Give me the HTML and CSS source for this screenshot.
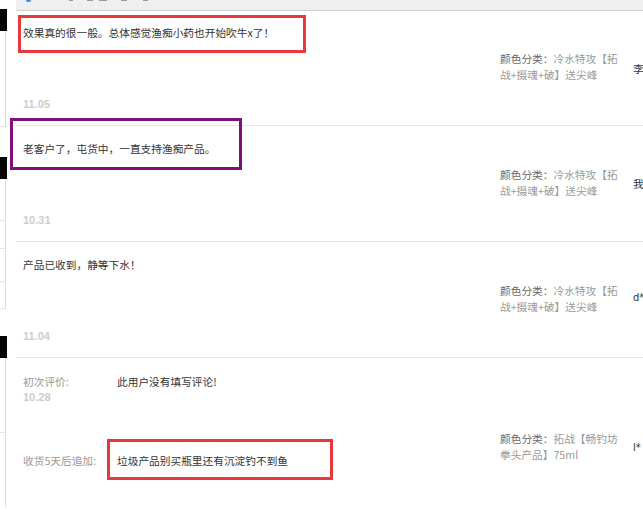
FILE: index.html
```html
<!DOCTYPE html>
<html lang="zh-CN">
<head>
<meta charset="utf-8">
<title>评价</title>
<link rel="stylesheet" href="styles.css">
</head>
<body>
<div class="page">
  <aside class="side">
    <div class="gap g9"></div>
    <div class="blk"></div>
    <div class="cell c96"></div>
    <div class="gap g30"></div>
    <div class="blk"></div>
    <div class="cell c15 nb"></div>
    <div class="cell c27"></div>
    <div class="cell c28"></div>
    <div class="cell c33"></div>
    <div class="cell c27"></div>
    <div class="gap g27"></div>
    <div class="blk"></div>
    <div class="cell c75"></div>
    <div class="cell c74 nb"></div>
  </aside>
  <main class="main">
    <div class="topbar">
      <span class="tb-dot"></span>
      <span class="tb-bit w4"></span>
      <span class="tb-bit w6"></span>
      <span class="tb-bit w8"></span>
      <span class="tb-bit w6"></span>
      <span class="tb-bit w5"></span>
    </div>

    <section class="row r1">
      <div class="body">
        <p class="comment">效果真的很一般。总体感觉渔痴小药也开始吹牛x了！</p>
        <p class="date">11.05</p>
      </div>
      <div class="sku"><p class="l1"><span class="k">颜色分类：</span>冷水特攻【拓</p><p class="l2">战+摄魂+破】送尖峰</p></div>
      <div class="user">李</div>
      <div class="mark red m1"></div>
    </section>

    <section class="row">
      <div class="body">
        <p class="comment">老客户了，屯货中，一直支持渔痴产品。</p>
        <p class="date">10.31</p>
      </div>
      <div class="sku"><p class="l1"><span class="k">颜色分类：</span>冷水特攻【拓</p><p class="l2">战+摄魂+破】送尖峰</p></div>
      <div class="user">我</div>
      <div class="mark purple m2"></div>
    </section>

    <section class="row">
      <div class="body">
        <p class="comment">产品已收到，静等下水！</p>
        <p class="date">11.04</p>
      </div>
      <div class="sku"><p class="l1"><span class="k">颜色分类：</span>冷水特攻【拓</p><p class="l2">战+摄魂+破】送尖峰</p></div>
      <div class="user u3">d*</div>
    </section>

    <section class="row last">
      <div class="body multi">
        <div class="first">
          <div class="label">初次评价:<p class="date d2">10.28</p></div>
          <p class="text">此用户没有填写评论!</p>
        </div>
        <div class="append">
          <div class="label">收货5天后追加:</div>
          <p class="text">垃圾产品别买瓶里还有沉淀钓不到鱼</p>
        </div>
      </div>
      <div class="sku s4"><p class="l1"><span class="k">颜色分类：</span>拓战【畅钓坊</p><p class="l2">拳头产品】75ml</p></div>
      <div class="user u4">l*</div>
      <div class="mark red m4"></div>
    </section>
  </main>
</div>
</body>
</html>
```

FILE: styles.css
```css
* { box-sizing: border-box; }
html, body { margin: 0; padding: 0; background: #fff; }
body {
  width: 643px;
  height: 509px;
  overflow: hidden;
  font-family: "Noto Sans CJK SC", "Noto Sans", sans-serif;
  font-size: 10.7px;
  color: #333;
}
p { margin: 0; }

.page { display: flex; gap: 9px; }

/* left sliver of another panel */
.side { width: 7px; flex: none; display: flex; flex-direction: column; }
.gap { flex: none; }
.g9 { height: 9px; }
.g30 { height: 30px; }
.g27 { height: 27px; }
.blk { height: 22px; background: #050505; flex: none; }
.cell { flex: none; width: 6px; border-right: 1px solid #dcdcdc; border-bottom: 1px solid #e4e4e4; }
.cell.nb { border-bottom: 0; }
.c96 { height: 96px; }
.c15 { height: 15px; }
.c27 { height: 27px; }
.c28 { height: 28px; }
.c33 { height: 33px; }
.c75 { height: 75px; }
.c74 { height: 74px; }

.main { flex: 1; min-width: 0; }

.topbar {
  height: 11px;
  background: #efefef;
  border-bottom: 1px solid #cfcfcf;
  display: flex;
  align-items: flex-start;
  gap: 6px;
  padding-left: 10px;
}
.tb-dot { width: 5px; height: 2px; background: #4a86d8; border-radius: 0 0 3px 3px; }
.tb-bit { height: 1px; background: #9a9a9a; }
.tb-bit.w4 { width: 4px; margin-left: 32px; }
.tb-bit.w6 { width: 6px; margin-left: 8px; }
.tb-bit.w8 { width: 8px; }
.tb-bit.w5 { width: 5px; margin-left: 10px; }

.row {
  position: relative;
  height: 116px;
  border-bottom: 1px solid #e6e6e6;
  display: grid;
  grid-template-columns: 484px 124px 1fr;
  align-items: start;
}
.row.r1 { height: 115px; }
.row.last { border-bottom: 0; height: 160px; }

.body {
  height: 100%;
  padding: 15px 0 14px 7px;
  display: flex;
  flex-direction: column;
  justify-content: space-between;
  line-height: 16px;
}
.r1 .body { padding-top: 14px; }
.comment { color: #333; }
.date {
  font-family: "Liberation Sans", Arial, sans-serif;
  font-weight: bold;
  font-size: 11px;
  color: #cdcdcd;
  line-height: 14px;
}

.sku {
  margin-top: 41px;
  line-height: 16px;
  color: #9a9a9a;
  white-space: nowrap;
}
.r1 .sku { margin-top: 40px; }
.sku .k { color: #666; }

.user {
  margin-top: 50px;
  padding-left: 9px;
  line-height: 16px;
  color: #333;
  white-space: nowrap;
}
.user.u3 { margin-top: 48px; font-family: "DejaVu Sans", sans-serif; font-size: 10px; }

/* last row: first + appended review */
.body.multi { justify-content: flex-start; padding-top: 16px; }
.first, .append { display: grid; grid-template-columns: 94px 1fr; }
.append { margin-top: 49px; }
.label { color: #999; }
.text { color: #333; }
.date.d2 { line-height: 14px; }
.sku.s4 { margin-top: 73px; }
.user.u4 { margin-top: 82px; font-family: "DejaVu Sans", sans-serif; font-size: 10px; }

/* annotation boxes drawn over the screenshot */
.mark { position: absolute; border: 3px solid #e8383d; pointer-events: none; }
.mark.purple { border-color: #7d0f7f; }
.m1 { left: 2px; top: 4px; width: 288px; height: 38px; }
.m2 { left: -6px; top: -8px; width: 232px; height: 52px; }
.m4 { left: 91px; top: 81px; width: 226px; height: 41px; }
```
